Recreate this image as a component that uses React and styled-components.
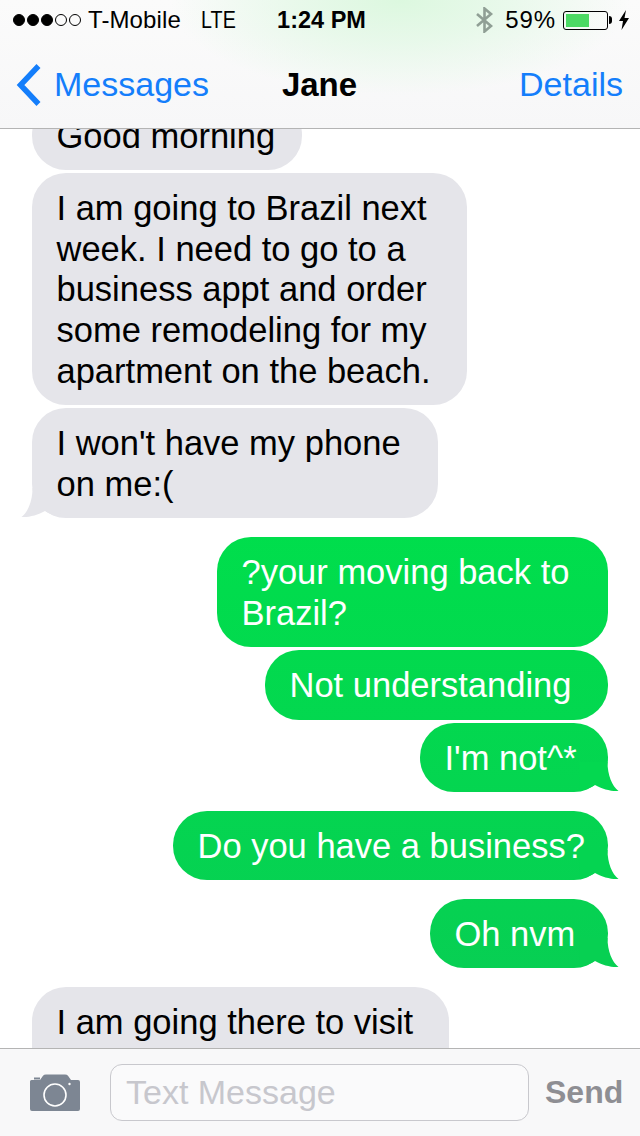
import React from 'react'
import styled, { createGlobalStyle } from 'styled-components'

const GlobalStyle = createGlobalStyle`
html, body {
  margin: 0;
  padding: 0;
  background: #fff;
}
`

const GREEN = 'linear-gradient(180deg, #00de4c 530px, #07cf53 970px) fixed'

const messages = [
  { id: 1, side: 'left', w: 270, lines: ['Good morning'] },
  { id: 2, side: 'left', w: 435, lines: ['I am going to Brazil next', 'week. I need to go to a', 'business appt and order', 'some remodeling for my', 'apartment on the beach.'] },
  { id: 3, side: 'left', w: 406, tail: '#e5e5ea', gap: 19, lines: ["I won't have my phone", 'on me:('] },
  { id: 4, side: 'right', w: 391, lines: ['?your moving back to', 'Brazil?'] },
  { id: 5, side: 'right', w: 343, lines: ['Not understanding'] },
  { id: 6, side: 'right', w: 188, tail: '#04d850', gap: 18.5, lines: ["I'm not^*"] },
  { id: 7, side: 'right', w: 435, tail: '#05d451', gap: 18.5, lines: ['Do you have a business?'] },
  { id: 8, side: 'right', w: 178, tail: '#07d052', gap: 18.5, lines: ['Oh nvm'] },
  { id: 9, side: 'left', w: 417, tall: true, lines: ['I am going there to visit'] },
]

function Tail({ side, color }) {
  return (
    <TailSvg $side={side} width="40" height="32" viewBox="0 0 40 32">
      <path d="M0 1 L28.5 1 C28.5 14 33 25 39.5 30 C32 30.5 23 28 16 24 C13 26 9 28 1 30 Z" fill={color} />
    </TailSvg>
  )
}

function Message({ item }) {
  return (
    <Row $side={item.side} $gap={item.gap}>
      <Bubble $side={item.side} $w={item.w} $tall={item.tall}>
        {item.tail && <Tail side={item.side} color={item.tail} />}
        {item.lines.map(line => <Line key={line}>{line}</Line>)}
      </Bubble>
    </Row>
  )
}

export default function App() {
  return (
    <Phone>
      <GlobalStyle />
      <Top>
        <StatusBar>
          <Carrier>
            <Dots>
              <Dot $on /><Dot $on /><Dot $on /><Dot /><Dot />
            </Dots>
            <span>T-Mobile</span>
            <Network>LTE</Network>
          </Carrier>
          <Clock>1:24 PM</Clock>
          <Power>
            <svg width="20" height="26" viewBox="0 0 20 26">
              <path d="M2 7 L16 19 L9.5 24.5 L9.5 1.5 L16 7 L2 19" fill="none" stroke="#909f95" strokeWidth="2.6" />
            </svg>
            <Percent>59%</Percent>
            <Battery><Charge style={{ width: '59%' }} /></Battery>
            <svg width="12" height="20" viewBox="0 0 12 20">
              <path d="M8 0 L1 11 L5 11 L3.5 20 L11 8 L6.5 8 Z" fill="#000" />
            </svg>
          </Power>
        </StatusBar>
        <NavBar>
          <BackLink>
            <svg width="27" height="44" viewBox="0 0 27 44">
              <path d="M22.5 3 L4.5 22 L22.5 41" fill="none" stroke="#147efb" strokeWidth="5.5" />
            </svg>
            <span>Messages</span>
          </BackLink>
          <Title>Jane</Title>
          <NavAction>Details</NavAction>
        </NavBar>
      </Top>

      <Thread>
        <ThreadInner>
          {messages.map(item => <Message key={item.id} item={item} />)}
        </ThreadInner>
      </Thread>

      <Composer>
        <svg width="50" height="38" viewBox="0 0 50 38">
          <path d="M4 5.5 L4 3.5 L10 3.5 L10 5.5 Z" fill="#7d8693" />
          <path d="M1.5 6 L10 6 L13 1.8 Q14 0.5 16 0.5 L35 0.5 Q37 0.5 38 1.8 L41 6 L48 6 Q50 6 50 8 L50 35 Q50 37 48 37 L2 37 Q0 37 0 35 L0 7.5 Q0 6 1.5 6 Z" fill="#7d8693" />
          <circle cx="25" cy="21" r="11" fill="none" stroke="#fff" strokeWidth="1.6" />
          <circle cx="39.5" cy="10" r="1.2" fill="#fff" />
        </svg>
        <TextField>Text Message</TextField>
        <Send>Send</Send>
      </Composer>
    </Phone>
  )
}

const Phone = styled.div`
width: 640px;
height: 1136px;
display: flex;
flex-direction: column;
overflow: hidden;
background: #fff;
font-family: "Liberation Sans", Arial, sans-serif;
color: #000;
`

const Top = styled.header`
flex: none;
height: 128px;
border-bottom: 1px solid #b4b4b4;
background:
  radial-gradient(ellipse 230px 95px at 400px 0px, #dcf8df 0%, rgba(226, 248, 229, 0.75) 45%, rgba(247, 247, 248, 0) 100%),
  linear-gradient(180deg, #fbfbfb 0%, #f7f7f8 100%);
`

const StatusBar = styled.div`
height: 40px;
padding: 0 10px 0 13px;
display: grid;
grid-template-columns: 1fr auto 1fr;
align-items: center;
font-size: 24px;
`

const Carrier = styled.div`
display: flex;
align-items: center;
letter-spacing: 0.1px;
`

const Dots = styled.div`
display: flex;
gap: 2px;
margin-right: 7px;
`

const Dot = styled.i`
display: block;
box-sizing: border-box;
width: 12px;
height: 12px;
border-radius: 50%;
border: 1px solid #000;
background: ${props => (props.$on ? '#000' : 'transparent')};
`

const Network = styled.span`
margin-left: 20px;
transform: scaleX(0.82);
transform-origin: left center;
`

const Clock = styled.div`
font-size: 23.5px;
font-weight: bold;
`

const Power = styled.div`
display: flex;
align-items: center;
justify-content: flex-end;
`

const Percent = styled.span`
margin: 0 7px 0 10px;
letter-spacing: 0.9px;
`

const Battery = styled.div`
position: relative;
box-sizing: border-box;
width: 45px;
height: 19px;
padding: 2px;
border: 1px solid #000;
border-radius: 3px;
margin-right: 10px;
&::after {
  content: '';
  position: absolute;
  right: -5px;
  top: 4px;
  width: 3px;
  height: 8px;
  background: #000;
  border-radius: 0 3px 3px 0;
}
`

const Charge = styled.div`
height: 100%;
background: #4cd964;
`

const NavBar = styled.nav`
height: 88px;
padding: 0 17px 0 16px;
display: grid;
grid-template-columns: 1fr auto 1fr;
align-items: center;
font-size: 34px;
color: #147efb;
`

const BackLink = styled.div`
display: flex;
align-items: center;
gap: 11px;
margin-top: 1px;
`

const Title = styled.div`
margin-top: 1px;
font-size: 33px;
font-weight: bold;
color: #000;
`

const NavAction = styled.div`
text-align: right;
`

const Thread = styled.main`
flex: 1;
min-height: 0;
overflow: hidden;
`

const ThreadInner = styled.div`
margin-top: -28.5px;
padding: 0 32px;
display: flex;
flex-direction: column;
gap: 3px;
`

const Row = styled.div`
display: flex;
justify-content: ${props => (props.$side === 'right' ? 'flex-end' : 'flex-start')};
margin-bottom: ${props => (props.$gap ? `${props.$gap - 3}px` : '0')};
`

const Bubble = styled.div`
position: relative;
box-sizing: border-box;
width: ${props => props.$w}px;
min-height: ${props => (props.$tall ? '110px' : '0')};
padding: 15px 0 13.8px 24.5px;
border-radius: 34px;
font-size: 34.5px;
line-height: 40.67px;
white-space: nowrap;
background: ${props => (props.$side === 'right' ? GREEN : '#e5e5ea')};
color: ${props => (props.$side === 'right' ? '#fff' : '#000')};
`

const Line = styled.div`
position: relative;
`

const TailSvg = styled.svg`
position: absolute;
bottom: -1px;
${props => (props.$side === 'left' ? 'left: -11px; transform: scaleX(-1);' : 'right: -11px;')}
`

const Composer = styled.footer`
flex: none;
height: 87px;
border-top: 1px solid #b4b4b4;
background: #f8f8f9;
padding: 0 16px 0 30px;
display: flex;
align-items: center;
`

const TextField = styled.div`
box-sizing: border-box;
width: 419px;
height: 57px;
margin: 0 16px 0 30px;
padding-left: 15px;
display: flex;
align-items: center;
border: 1px solid #c8c8cd;
border-radius: 12px;
background: #fafafb;
font-size: 34px;
color: #c7c7cd;
`

const Send = styled.div`
font-size: 32px;
font-weight: bold;
color: #8e8e93;
`
